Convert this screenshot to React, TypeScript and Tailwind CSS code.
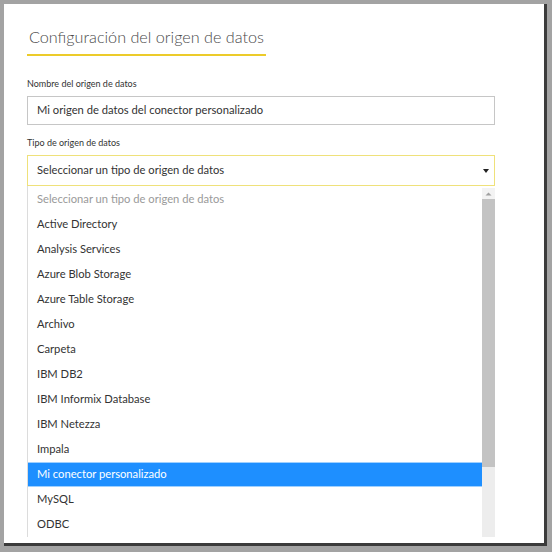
export default function App() {
  const items = [
    "Active Directory",
    "Analysis Services",
    "Azure Blob Storage",
    "Azure Table Storage",
    "Archivo",
    "Carpeta",
    "IBM DB2",
    "IBM Informix Database",
    "IBM Netezza",
    "Impala",
    "Mi conector personalizado",
    "MySQL",
    "ODBC",
  ];

  return (
    <div
      className="w-[552px] h-[552px] bg-[#a3a3a3] pt-[4px] pl-[4px]"
      style={{ fontFamily: 'Lato, "Open Sans", sans-serif' }}
    >
      <div className="w-[543px] h-[542px] bg-white border-r-[3px] border-b-[3px] border-[#3b3b3b] pl-[23px] pt-[23px]">
        {/* Header */}
        <div className="w-[239px]">
          <h1 className="whitespace-nowrap text-[16.2px] leading-[20px] font-light text-[#4a4a4a] pl-[2px]">
            Configuración del origen de datos
          </h1>
          <div className="mt-[7px] h-[2px] bg-[#eccb2a]" />
        </div>

        {/* Nombre */}
        <label className="block mt-[22px] text-[9px] leading-[12px] text-[#333]">
          Nombre del origen de datos
        </label>
        <div className="mt-[6px] w-[468px] h-[29px] border border-[#c6c6c6] flex items-center pl-[9px] text-[11.2px] text-[#333]">
          Mi origen de datos del conector personalizado
        </div>

        {/* Tipo */}
        <label className="block mt-[12px] text-[9px] leading-[12px] text-[#333]">
          Tipo de origen de datos
        </label>
        <div className="mt-[6px] w-[468px] h-[31px] border-[1.5px] border-[#efe17a] flex items-center justify-between pl-[9px] pr-[4px] text-[11.2px] text-[#333]">
          <span>Seleccionar un tipo de origen de datos</span>
          <svg width="8" height="6" viewBox="0 0 8 6">
            <path d="M1 1 L7 1 L4 5 Z" fill="#222" />
          </svg>
        </div>

        {/* Dropdown list */}
        <div className="w-[468px] h-[351px] flex overflow-hidden">
          <div className="w-[455px] border-l border-[#dcdcdc] pt-[1px] text-[11.2px] text-[#333]">
            <div className="h-[25px] flex items-center pl-[9px] text-[#9a9a9a]">
              Seleccionar un tipo de origen de datos
            </div>
            {items.map((item) =>
              item === "Mi conector personalizado" ? (
                <div
                  key={item}
                  className="h-[25px] flex items-center pl-[9px] bg-[#1e8fff] text-white border-y border-[#9fd0ff]"
                >
                  {item}
                </div>
              ) : (
                <div key={item} className="h-[25px] flex items-center pl-[9px]">
                  {item}
                </div>
              )
            )}
          </div>

          {/* Scrollbar */}
          <div className="w-[13px] flex flex-col bg-[#ededed] mt-[2px]">
            <div className="h-[11px] flex items-center justify-center bg-[#f3f3f3]">
              <svg width="7" height="4" viewBox="0 0 7 4">
                <path d="M0.5 3.5 L3.5 0.5 L6.5 3.5 Z" fill="#a0a0a0" />
              </svg>
            </div>
            <div className="h-[268px] bg-[#c3c3c3]" />
          </div>
        </div>
      </div>
    </div>
  );
}
